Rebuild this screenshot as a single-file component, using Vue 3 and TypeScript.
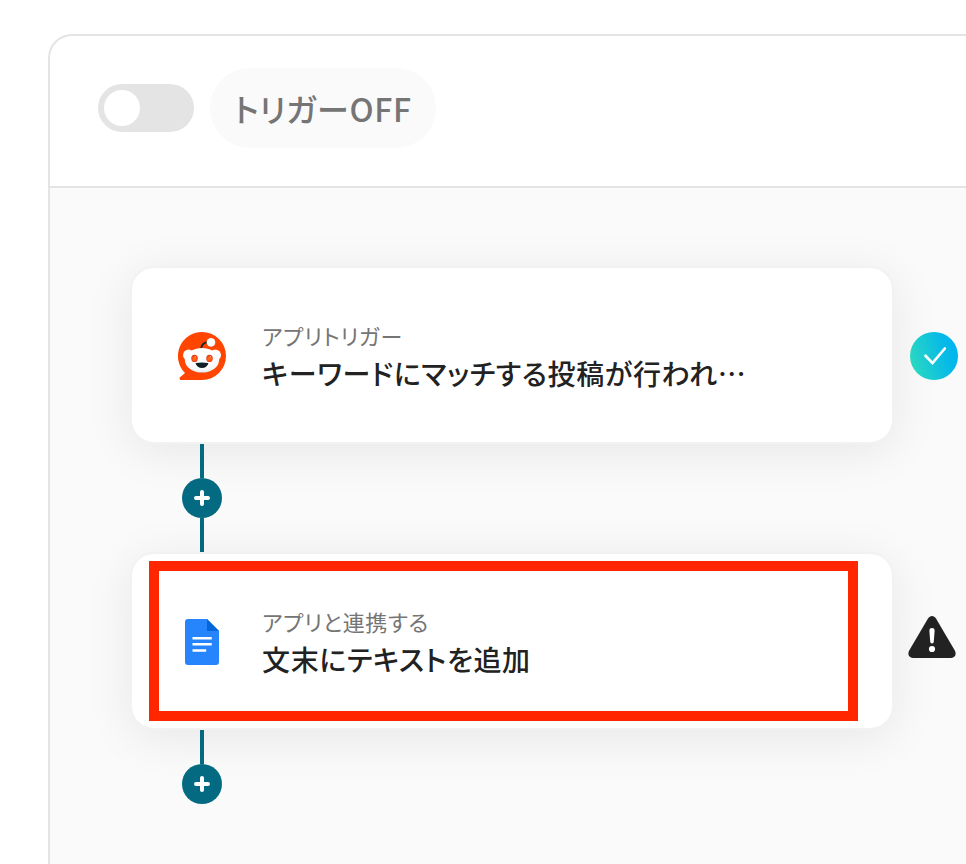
<script setup lang="ts">
import { ref } from 'vue'

interface Step {
  id: number
  app: 'reddit' | 'docs'
  kind: string
  title: string
  status: 'done' | 'warning'
  highlighted: boolean
}

const triggerOn = ref(false)

const steps: Step[] = [
  { id: 1, app: 'reddit', kind: 'アプリトリガー', title: 'キーワードにマッチする投稿が行われ…', status: 'done', highlighted: false },
  { id: 2, app: 'docs', kind: 'アプリと連携する', title: '文末にテキストを追加', status: 'warning', highlighted: true },
]
</script>

<template>
  <main class="page">
    <section class="panel">
      <header class="panel-head">
        <input id="trigger" v-model="triggerOn" class="toggle" type="checkbox" role="switch" />
        <label class="trigger-label" for="trigger">トリガー{{ triggerOn ? 'ON' : 'OFF' }}</label>
      </header>

      <div class="flow">
        <template v-for="step in steps" :key="step.id">
          <div class="row">
            <article class="card">
              <svg v-if="step.app === 'reddit'" class="app-icon" viewBox="0 0 48 48" aria-hidden="true">
                <defs>
                  <radialGradient id="face" cx="0.5" cy="0.3" r="0.75">
                    <stop offset="0.5" stop-color="#ffffff" />
                    <stop offset="0.85" stop-color="#f2f6f9" />
                    <stop offset="1" stop-color="#c4d4dd" />
                  </radialGradient>
                  <radialGradient id="eye" cx="0.5" cy="0.55" r="0.6">
                    <stop offset="0" stop-color="#ff7a18" />
                    <stop offset="0.6" stop-color="#ff4a10" />
                    <stop offset="1" stop-color="#c91e08" />
                  </radialGradient>
                </defs>
                <path d="M24 0a24 24 0 1 1 0 48H3.2c-1.6 0-2.2-1.6-1.2-2.7L7 41A24 24 0 0 1 24 0Z" fill="#ff4500" />
                <circle cx="10.6" cy="23.2" r="5.6" fill="url(#face)" />
                <circle cx="37.4" cy="23.2" r="5.6" fill="url(#face)" />
                <path d="M23.3 16.5c.2-3.3 2.4-5.8 6.4-6.3" fill="none" stroke="#172126" stroke-width="1.8" stroke-linecap="round" />
                <circle cx="33" cy="10.4" r="4.3" fill="url(#face)" />
                <ellipse cx="24" cy="28.2" rx="17" ry="12.3" fill="url(#face)" />
                <ellipse cx="16.5" cy="26.4" rx="3.2" ry="3.7" fill="url(#eye)" />
                <ellipse cx="31.5" cy="26.4" rx="3.2" ry="3.7" fill="url(#eye)" />
                <circle cx="17.4" cy="24.7" r="0.6" fill="#ffb898" />
                <circle cx="32.4" cy="24.7" r="0.6" fill="#ffb898" />
                <path d="M18 31Q24 29.900 30 31c.4 0 .5.3.4.6-.9 2.700-3.300 4.500-6.400 4.500s-5.500-1.800-6.400-4.500c-.1-.3 0-.6.4-.6Z" fill="#101e25" />
              </svg>
              <svg v-else class="app-icon" viewBox="0 0 48 48" aria-hidden="true">
                <path d="M10 1H29l12 12v31a3 3 0 0 1-3 3H10a3 3 0 0 1-3-3V4a3 3 0 0 1 3-3Z" fill="#2684fc" />
                <path d="M29 1l12 12H29Z" fill="#0066da" />
                <path d="M14.5 20.2h19.2M14.5 26.3h19.2M14.5 32.5h13.7" stroke="#ffffff" stroke-width="2.6" />
              </svg>
              <div class="card-text">
                <p class="kind">{{ step.kind }}</p>
                <h2 class="title">{{ step.title }}</h2>
              </div>
              <div v-if="step.highlighted" class="highlight"></div>
            </article>

            <svg v-if="step.status === 'done'" class="status" viewBox="0 0 48 48" role="img" aria-label="設定済み">
              <defs>
                <linearGradient id="done" x1="0" y1="0.65" x2="1" y2="0.35">
                  <stop offset="0" stop-color="#2bd9c0" />
                  <stop offset="0.75" stop-color="#06b9e8" />
                  <stop offset="1" stop-color="#00b4f0" />
                </linearGradient>
              </defs>
              <circle cx="24" cy="24" r="24" fill="url(#done)" />
              <path d="M15.5 23.8l7 7.3 12.3-14.6" fill="none" stroke="#ffffff" stroke-width="2.7" stroke-linecap="round" stroke-linejoin="miter" />
            </svg>
            <svg v-else class="status" viewBox="2 5 48 48" role="img" aria-label="未設定">
              <path d="M20 5.500 1.200 37.500C-.9 41.200 1.200 45 5 45h38c3.800 0 5.900-3.800 3.800-7.500L28 5.500c-2-3.400-6-3.400-8 0Z" fill="#222222" />
              <path d="M24 15c1.900 0 2.700 1.100 2.600 3l-.8 10.500c-.1 1.300-.8 2-1.800 2s-1.700-.7-1.800-2L21.400 18c-.1-1.900.7-3 2.600-3Z" fill="#ffffff" />
              <circle cx="24" cy="36" r="3.1" fill="#ffffff" />
            </svg>
          </div>

          <div class="connector">
            <button class="add" type="button" aria-label="追加">
              <svg viewBox="0 0 40 40" aria-hidden="true">
                <path d="M20 14v12M14 20h12" stroke="#ffffff" stroke-width="4" stroke-linecap="round" />
              </svg>
            </button>
            <span v-if="step.id < steps.length" class="line"></span>
          </div>
        </template>
      </div>
    </section>
  </main>
</template>

<style>
body {
  margin: 0;
  background: #ffffff;
}
</style>

<style scoped>
.page {
  box-sizing: border-box;
  display: flex;
  min-height: 100vh;
  padding: 34px 0 0 48px;
  font-family: "Noto Sans CJK JP", sans-serif;
  font-feature-settings: "palt";
  letter-spacing: 0.04em;
  color: #222222;
}

.panel {
  flex: 1;
  min-width: 0;
  display: flex;
  flex-direction: column;
  overflow: hidden;
  border: 2px solid #e4e4e4;
  border-width: 2px 0 0 2px;
  border-radius: 24px 0 0 0;
}

.panel-head {
  display: flex;
  align-items: center;
  gap: 16px;
  padding: 32px 48px 38px;
  border-bottom: 2px solid #e4e4e4;
}

.toggle {
  appearance: none;
  box-sizing: border-box;
  display: flex;
  width: 96px;
  height: 48px;
  margin: 0;
  padding: 6px;
  border-radius: 24px;
  background: #e4e4e4;
  cursor: pointer;
}

.toggle::before {
  content: "";
  width: 36px;
  height: 36px;
  border-radius: 50%;
  background: #ffffff;
}

.toggle:checked {
  justify-content: flex-end;
  background: #046a82;
}

.trigger-label {
  padding: 0 24px;
  border-radius: 40px;
  background: #fafafa;
  color: #757575;
  font-size: 32px;
  font-weight: 500;
  line-height: 80px;
}

.flow {
  flex: 1;
  padding: 78px 8px 60px 80px;
  background: #fafafa;
}

.row {
  display: flex;
  align-items: center;
  gap: 16px;
}

.card {
  position: relative;
  box-sizing: border-box;
  flex: 1;
  min-width: 0;
  height: 178px;
  display: flex;
  align-items: center;
  gap: 36px;
  padding: 2px 46px 0;
  border: 2px solid #f2f2f2;
  border-radius: 24px;
  background: #ffffff;
  box-shadow: 0 8px 48px rgba(0, 0, 0, 0.08);
}

.app-icon {
  flex: none;
  width: 48px;
  height: 48px;
}

.card-text {
  min-width: 0;
}

.kind {
  margin: 0;
  color: #757575;
  font-size: 22px;
  font-weight: 400;
  line-height: 34px;
}

.title {
  margin: 0;
  overflow: hidden;
  font-size: 28px;
  font-weight: 500;
  line-height: 42px;
  text-overflow: ellipsis;
  white-space: nowrap;
}

.highlight {
  position: absolute;
  inset: 7px 34px 7px 17px;
  border: 10px solid #ff2600;
  pointer-events: none;
}

.status {
  flex: none;
  width: 48px;
  height: 48px;
  margin-top: 2px;
  overflow: visible;
  z-index: 1;
}

.connector {
  position: relative;
  display: flex;
  flex-direction: column;
  align-items: center;
  width: 144px;
}

.connector::before,
.line {
  content: "";
  width: 4px;
  height: 34px;
  background: #046a82;
}

.add {
  width: 40px;
  height: 40px;
  padding: 0;
  border: 0;
  border-radius: 50%;
  background: #046a82;
  cursor: pointer;
}

.add svg {
  display: block;
  width: 40px;
  height: 40px;
}
</style>
